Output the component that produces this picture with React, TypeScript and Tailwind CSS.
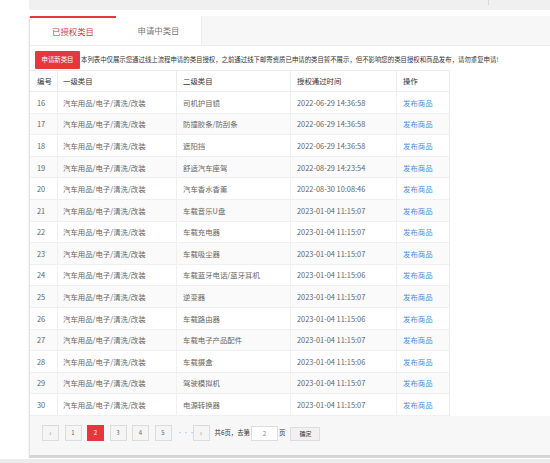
import React from "react";

const rows: [string, string, string][] = [
  ["16", "司机护目镜", "2022-06-29 14:36:58"],
  ["17", "防撞胶条/防刮条", "2022-06-29 14:36:58"],
  ["18", "遮阳挡", "2022-06-29 14:36:58"],
  ["19", "舒适汽车座驾", "2022-08-29 14:23:54"],
  ["20", "汽车香水香薰", "2022-08-30 10:08:46"],
  ["21", "车载音乐U盘", "2023-01-04 11:15:07"],
  ["22", "车载充电器", "2023-01-04 11:15:07"],
  ["23", "车载吸尘器", "2023-01-04 11:15:07"],
  ["24", "车载蓝牙电话/蓝牙耳机", "2023-01-04 11:15:06"],
  ["25", "逆变器", "2023-01-04 11:15:07"],
  ["26", "车载路由器", "2023-01-04 11:15:06"],
  ["27", "车载电子产品配件", "2023-01-04 11:15:07"],
  ["28", "车载摄盒", "2023-01-04 11:15:06"],
  ["29", "驾驶模拟机", "2023-01-04 11:15:07"],
  ["30", "电源转换器", "2023-01-04 11:15:07"],
];

const cols = "grid grid-cols-[28px_119px_114px_106px_53px]";

function PageBox({ children, active }: { children: React.ReactNode; active?: boolean }) {
  return (
    <div
      className={
        active
          ? "w-[17px] h-[16px] flex items-center justify-center bg-[#e4393c] border border-[#e4393c] text-white text-[6px]"
          : "w-[17px] h-[16px] flex items-center justify-center bg-[#f5f5f5] border border-[#dcdcdc] text-[#666] text-[6px]"
      }
    >
      {children}
    </div>
  );
}

export default function App() {
  return (
    <div
      className="w-[550px] h-[463px] bg-white overflow-hidden flex flex-col"
      style={{ fontFamily: '"Noto Sans CJK SC", "Noto Sans", sans-serif' }}
    >
      {/* top gray bar */}
      <div className="h-[10px] ml-[29px] bg-[#f0f0f0] flex">
        <div className="w-[459px]" />
        <div className="w-px h-[5px] bg-[#d8d8d8]" />
      </div>
      <div className="h-[6px]" />

      {/* panel */}
      <div className="ml-[29px] flex-1 flex flex-col border-l border-[#e2e2e2] border-b-[3px] border-b-[#d6d6d6] shadow-[0_1px_2px_rgba(0,0,0,0.12)]">
        {/* tabs */}
        <div className="h-[30px] bg-[#f7f7f7] flex border-b border-[#ececec]">
          <div className="w-[86px] bg-white border-t-2 border-[#e4393c] flex items-center justify-center text-[8.4px] text-[#d23b3f]">
            已授权类目
          </div>
          <div className="w-[86px] bg-white border-r border-[#ececec] flex items-center justify-center text-[8.4px] text-[#777]">
            申请中类目
          </div>
        </div>

        {/* content */}
        <div className="flex-1 flex flex-col bg-white">
          <div className="h-[24px] pt-[5px] pl-[5px] flex items-start gap-[1px]">
            <div className="h-[18px] w-[45px] bg-[#e4393c] text-white text-[6.4px] flex items-center justify-center rounded-[1px]">
              申请新类目
            </div>
            <div className="h-[18px] flex items-center text-[6.4px] text-[#333] whitespace-nowrap">
              本列表中仅展示您通过线上流程申请的类目授权，之前通过线下邮寄资质已申请的类目暂不展示，但不影响您的类目授权和商品发布，请勿重复申请!
            </div>
          </div>

          {/* table */}
          <div className="w-[420px] border-t border-r border-[#ececec] text-[7.4px]">
            <div className={`${cols} h-[21px] border-b border-[#ececec] text-[#333] bg-white`}>
              <div className="pl-[7px] flex items-center border-r border-[#ececec]">编号</div>
              <div className="pl-[5px] flex items-center border-r border-[#ececec]">一级类目</div>
              <div className="pl-[6px] flex items-center border-r border-[#ececec]">二级类目</div>
              <div className="pl-[6px] flex items-center border-r border-[#ececec]">授权通过时间</div>
              <div className="pl-[6px] flex items-center">操作</div>
            </div>
            {rows.map((r, i) => (
              <div
                key={r[0]}
                className={`${cols} h-[21.6px] border-b border-[#f0f0f0] text-[#666] ${i % 2 === 1 ? "bg-[#fafafa]" : "bg-white"}`}
              >
                <div className="pl-[7px] flex items-center border-r border-[#f0f0f0]">{r[0]}</div>
                <div className="pl-[5px] flex items-center border-r border-[#f0f0f0] whitespace-nowrap">汽车用品/电子/清洗/改装</div>
                <div className="pl-[6px] flex items-center border-r border-[#f0f0f0] whitespace-nowrap">{r[1]}</div>
                <div className="pl-[6px] flex items-center border-r border-[#f0f0f0] whitespace-nowrap">{r[2]}</div>
                <div className="pl-[6px] flex items-center text-[#4a90e2] whitespace-nowrap">发布商品</div>
              </div>
            ))}
          </div>

          {/* pagination */}
          <div className="flex-1 bg-[#f7f7f7] pt-[9px] pl-[12px] flex items-start text-[#666]">
            <div className="flex items-center gap-[5.5px]">
              <PageBox>
                <span className="text-[8px] text-[#999]">‹</span>
              </PageBox>
              <PageBox>1</PageBox>
              <PageBox active>2</PageBox>
              <PageBox>3</PageBox>
              <PageBox>4</PageBox>
              <PageBox>5</PageBox>
              <div className="w-[10px] text-center text-[6px] text-[#bbb]">···</div>
              <PageBox>
                <span className="text-[8px] text-[#999]">›</span>
              </PageBox>
            </div>
            <div className="h-[16px] flex items-center ml-[5px] text-[6.4px] text-[#333] whitespace-nowrap">
              共6页，去第
            </div>
            <div className="ml-[1px] mt-[1px] w-[27px] h-[15px] bg-white border border-[#ddd] flex items-center justify-center text-[6px] text-[#888]">
              2
            </div>
            <div className="h-[16px] flex items-center ml-[1px] text-[6.4px] text-[#333]">页</div>
            <div className="ml-[5px] mt-[2px] w-[30px] h-[14px] bg-[#f1f1f1] border border-[#ddd] flex items-center justify-center text-[6px] text-[#333]">
              确定
            </div>
          </div>
        </div>
      </div>
      <div className="h-[1px] bg-white" />
      <div className="h-[4px] bg-[#ececec]" />
    </div>
  );
}
